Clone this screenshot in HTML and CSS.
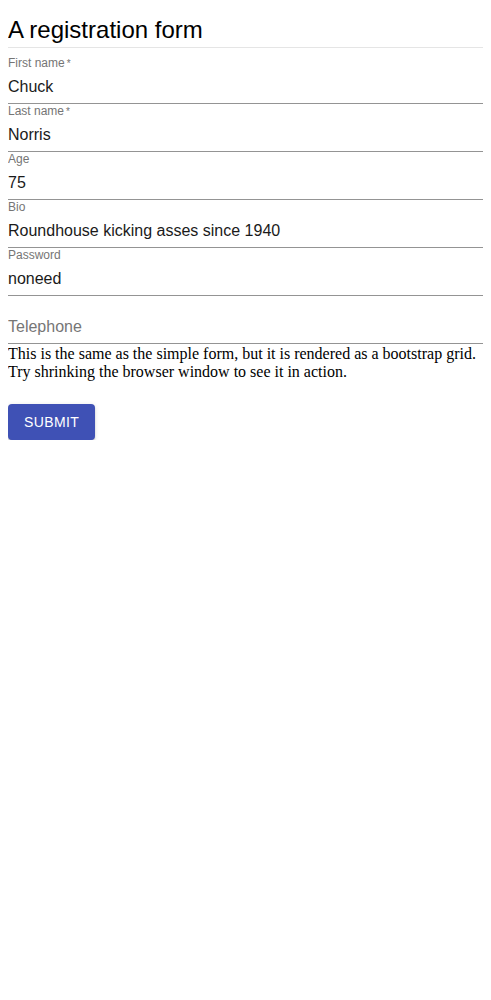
FILE: index.html
```html
<!DOCTYPE html>
<html lang="en">
<head>
<meta charset="utf-8">
<title>A registration form</title>
<link rel="stylesheet" href="styles.css">
</head>
<body>
<form class="form">
  <div class="legend">A registration form</div>
  <div class="field">
    <div class="label">First name<span class="req">&thinsp;*</span></div>
    <div class="value">Chuck</div>
  </div>
  <div class="field">
    <div class="label">Last name<span class="req">&thinsp;*</span></div>
    <div class="value">Norris</div>
  </div>
  <div class="field">
    <div class="label">Age</div>
    <div class="value">75</div>
  </div>
  <div class="field">
    <div class="label">Bio</div>
    <div class="value">Roundhouse kicking asses since 1940</div>
  </div>
  <div class="field">
    <div class="label">Password</div>
    <div class="value">noneed</div>
  </div>
  <div class="field">
    <div class="label"></div>
    <div class="value placeholder">Telephone</div>
  </div>
  <div class="help">This is the same as the simple form, but it is rendered as a bootstrap grid. Try shrinking the browser window to see it in action.</div>
  <div class="actions">
    <button type="button" class="submit">Submit</button>
  </div>
</form>
</body>
</html>
```
FILE: styles.css
```css
html, body {
  background: #ffffff;
}
body {
  margin: 8px;
  font-family: "Liberation Serif", "Times New Roman", serif;
  font-size: 16px;
  color: #000000;
}
.form {
  display: flex;
  flex-direction: column;
}
.legend {
  font-family: "Liberation Sans", Arial, sans-serif;
  font-size: 24px;
  line-height: 28px;
  margin-top: 8px;
  padding-bottom: 3px;
  border-bottom: 1px solid #e5e5e5;
  margin-bottom: 8px;
  color: #000000;
}
.field {
  display: flex;
  flex-direction: column;
  height: 48px;
  box-sizing: border-box;
  border-bottom: 1px solid #949494;
  font-family: "Liberation Sans", Arial, sans-serif;
}
.label {
  font-size: 12px;
  line-height: 12px;
  height: 12px;
  margin-top: 1px;
  color: #757575;
  white-space: nowrap;
}
.req {
  font-size: 10px;
}
.value {
  font-size: 16px;
  line-height: 23px;
  margin-top: 6px;
  padding-bottom: 5px;
  color: #1a1a1a;
  white-space: nowrap;
}
.value.placeholder {
  color: #767676;
}
.help {
  line-height: 18px;
  padding-top: 1px;
}
.actions {
  display: flex;
  margin-top: 23px;
}
.submit {
  font-family: "Liberation Sans", Arial, sans-serif;
  font-size: 14px;
  font-weight: 500;
  letter-spacing: 0.4px;
  text-transform: uppercase;
  line-height: 24px;
  height: 36px;
  padding: 6px 16px;
  border: none;
  border-radius: 4px;
  background: #3f51b5;
  color: #ffffff;
  box-shadow: 0px 3px 1px -2px rgba(0,0,0,0.2), 0px 2px 2px 0px rgba(0,0,0,0.14), 0px 1px 5px 0px rgba(0,0,0,0.12);
  cursor: pointer;
}
```
